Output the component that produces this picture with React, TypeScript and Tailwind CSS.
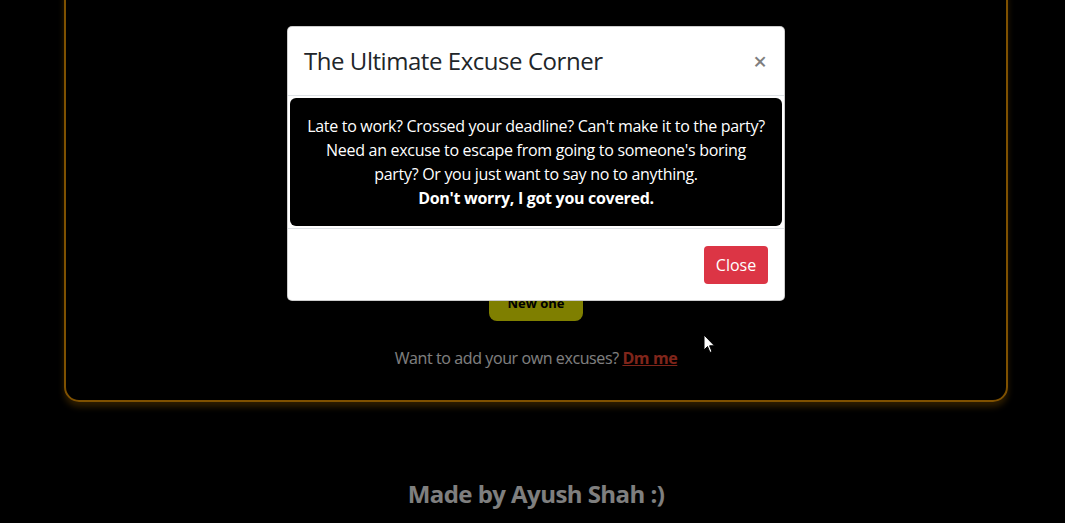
import React from 'react'

const font = { fontFamily: '"Open Sans", "Noto Sans", sans-serif' }

const Cursor: React.FC = () => (
  <svg className="absolute left-[703px] top-[334px] z-30" width="13" height="20" viewBox="0 0 13 20">
    <path d="M1 1 L1 16 L4.5 12.5 L7 18.5 L9 17.5 L6.6 11.8 L11.5 11.8 Z" fill="#fff" stroke="#000" strokeWidth="1" />
  </svg>
)

const lines = [
  "Late to work? Crossed your deadline? Can't make it to the party?",
  "Need an excuse to escape from going to someone's boring",
  'party? Or you just want to say no to anything.',
]

export default function App() {
  return (
    <div className="h-[523px] w-full overflow-hidden bg-black" style={font}>
      <div className="relative w-[1072px] h-[523px]">
        {/* page underneath */}
        <div className="flex flex-col">
          <div className="mx-[64px] -mt-[20px] h-[422px] rounded-[15px] border-2 border-[#ffa200] shadow-[0_5px_6px_rgba(255,162,0,0.35)] flex flex-col items-center justify-end pb-[30px]">
            <button className="w-[94px] h-[35px] rounded-[8px] bg-[#ffff00] text-black text-[13px] font-bold">
              New one
            </button>
            <p className="mt-[25px] text-[16px] leading-6 text-white tracking-[-0.4px]">
              Want to add your own excuses?{' '}
              <a href="#" className="font-bold underline text-[#ff4a35]">
                Dm me
              </a>
            </p>
          </div>
          <h2 className="mt-[74px] text-center text-[24px] leading-9 font-bold text-white tracking-[-0.55px]">
            Made by Ayush Shah :)
          </h2>
        </div>

        {/* modal backdrop */}
        <div className="absolute inset-0 bg-black/50 z-10" />

        <div className="absolute inset-0 z-20 flex justify-center pt-[26px]">
          <div className="w-[498px] h-fit bg-white rounded-[5px] border border-black/20 flex flex-col">
            <div className="flex items-center justify-between px-4 py-4 border-b border-[#dee2e6]">
              <h5 className="text-[24px] leading-9 font-medium text-[#212529] tracking-[-0.45px]">
                The Ultimate Excuse Corner
              </h5>
              <span className="text-[24px] leading-none font-semibold text-black/50 mr-[1px]">×</span>
            </div>
            <div className="p-[2px]">
              <div className="bg-black rounded-[6px] p-4 text-center text-white text-[16px] leading-6 tracking-[-0.3px]">
                {lines.map((l) => (
                  <div key={l} className="whitespace-nowrap">
                    {l}
                  </div>
                ))}
                <div className="whitespace-nowrap font-bold">Don't worry, I got you covered.</div>
              </div>
            </div>
            <div className="flex justify-end px-3 pt-[13px] pb-3 border-t border-[#dee2e6]">
              <button className="m-1 h-[38px] w-[64px] rounded-[4px] bg-[#dc3545] text-white text-[16px]">Close</button>
            </div>
          </div>
        </div>

        <Cursor />
      </div>
    </div>
  )
}
